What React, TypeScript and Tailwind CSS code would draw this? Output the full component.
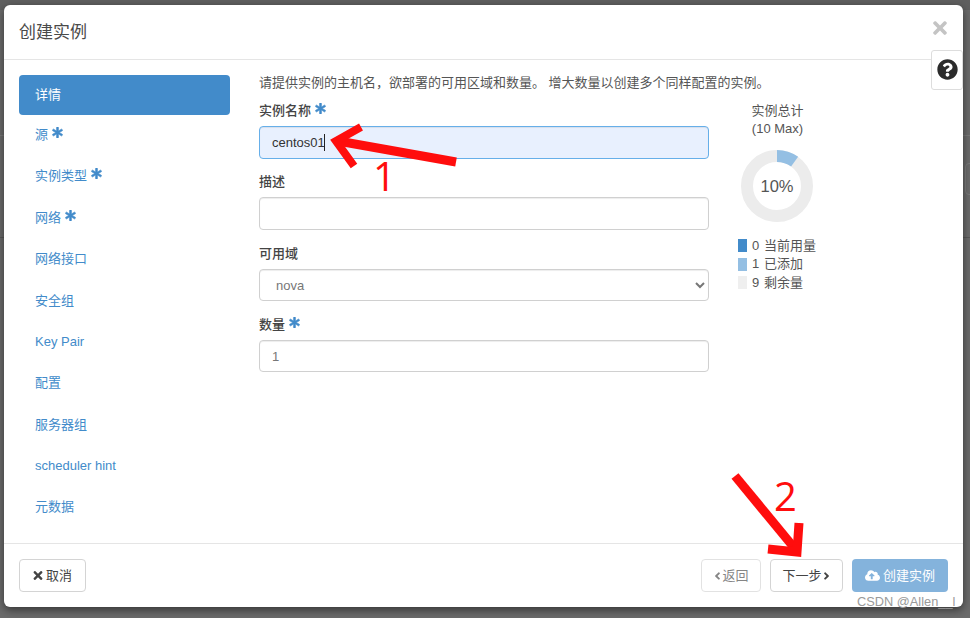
import React from 'react';
import { FaAsterisk, FaTimes, FaQuestionCircle, FaCloudUploadAlt, FaAngleLeft, FaAngleRight } from 'react-icons/fa';

const font = "font-['Liberation_Sans','Noto_Sans_CJK_SC',sans-serif]";

const steps = [
  { label: '源', required: true },
  { label: '实例类型', required: true },
  { label: '网络', required: true },
  { label: '网络接口' },
  { label: '安全组' },
  { label: 'Key Pair' },
  { label: '配置' },
  { label: '服务器组' },
  { label: 'scheduler hint' },
  { label: '元数据' },
];

const Star = () => (
  <FaAsterisk className="inline-block w-[11px] h-[11px] text-[#428bca] stroke-current stroke-[30] ml-[4px] mb-[6px]" />
);

const Field = ({ label, required, className, children }: { label: string; required?: boolean; className?: string; children: React.ReactNode }) => (
  <div className={className}>
    <div className="h-[20px] mb-[5px] text-[13px] leading-[20px] font-medium text-[#444]">
      {label}
      {required && <Star />}
    </div>
    {children}
  </div>
);

const inputCls = 'w-full h-[33px] px-3 text-[13px] rounded-[4px] border border-[#d0d0d0] bg-white shadow-[inset_0_1px_1px_rgba(0,0,0,0.075)] outline-none';

const legend = [
  { color: 'bg-[#428bca]', n: 0, label: '当前用量' },
  { color: 'bg-[#94bfe3]', n: 1, label: '已添加' },
  { color: 'bg-[#efefef]', n: 9, label: '剩余量' },
];

const Donut = () => (
  <div className="relative w-[72px] h-[72px]">
    <svg viewBox="0 0 72 72" className="w-full h-full">
      <circle cx="36" cy="36" r="30" fill="none" stroke="#ececec" strokeWidth="12" />
      <path d="M36 6 A30 30 0 0 1 53.6 11.7" fill="none" stroke="#94bfe3" strokeWidth="12" />
    </svg>
    <div className="absolute inset-0 flex items-center justify-center text-[16.5px] text-[#555]">10%</div>
  </div>
);

// dimmed page that shows round the dialog
const Backdrop = () => (
  <>
    <div className="absolute left-0 top-0 w-full h-[10px] bg-[#5f5f5f]" />
    <div className="absolute left-0 top-[135px] w-full h-px bg-[#7a7a7a]" />
    <div className="absolute left-0 top-[237px] w-full h-px bg-[#585858]" />
    <div className="absolute left-[965px] top-[163px] w-[12px] h-[32px] border border-[#7c7c7c] rounded-[4px]" />
  </>
);

// red marks someone drew over the screenshot
const Annotations = () => (
  <>
    <svg className="absolute left-0 top-0 pointer-events-none" width="970" height="618" fill="none" stroke="#ff0d0d">
      <path d="M456 162 L338 141" strokeWidth="9" />
      <path d="M361 127 L336 141 L354 166" strokeWidth="8" />
      <path d="M735 476 L796 550" strokeWidth="9" />
      <path d="M799 523 L797 552 L768 549" strokeWidth="9" />
    </svg>
    <span className="absolute left-[373px] top-[152px] text-[40px] leading-[48px] font-['Open_Sans'] font-normal text-[#ff0d0d]">1</span>
    <span className="absolute left-[774px] top-[472px] text-[40px] leading-[48px] font-['Open_Sans'] font-normal text-[#ff0d0d]">2</span>
    <span className="absolute left-[857px] top-[594px] text-[12.8px] leading-[16px] text-[#9a9a9a] whitespace-nowrap">CSDN @Allen__l</span>
  </>
);

export default function App() {
  return (
    <div className={`relative w-[970px] h-[618px] overflow-hidden bg-[#6b6b6b] pl-[4px] pt-[5px] ${font}`}>
      <Backdrop />
      <div className="relative w-[959px] h-[602px] flex flex-col bg-white rounded-[6px] shadow-[0_3px_9px_rgba(0,0,0,0.5)]">
        {/* Header */}
        <div className="h-[55px] shrink-0 flex items-center justify-between pl-[15px] pr-[13px] border-b border-[#e5e5e5]">
          <h4 className="text-[17px] text-[#4a4a4a] mt-[1px]">创建实例</h4>
          <FaTimes className="w-[20px] h-[20px] text-[#c4c4c4] mb-[9px]" />
        </div>
        <div className="absolute right-0 top-[45px] w-[32px] h-[40px] flex items-center justify-center pb-[2px] bg-white border border-[#ddd] rounded-[3px]">
          <FaQuestionCircle className="w-[21px] h-[21px] text-[#2b2b2b]" />
        </div>

        {/* Body */}
        <div className="flex-1 flex pl-[15px] pt-[15px] pr-[15px]">
          <ul className="w-[211px] shrink-0 text-[13px] text-[#428bca]">
            <li className="h-[40px] mb-[-1px] flex items-center pl-[16px] bg-[#428bca] text-white rounded-[4px]">详情</li>
            {steps.map((s) => (
              <li key={s.label} className="h-[41.4px] flex items-center pl-[16px]">
                <span>
                  {s.label}
                  {s.required && <Star />}
                </span>
              </li>
            ))}
          </ul>

          <div className="ml-[29px] flex-1">
            <p className="text-[13px] leading-[18px] text-[#555] mt-[-1px] mb-[9px]">
              请提供实例的主机名，欲部署的可用区域和数量。 增大数量以创建多个同样配置的实例。
            </p>
            <div className="flex">
              <div className="w-[450px]">
                <Field label="实例名称" required className="mb-[13px]">
                  <div className="relative">
                    <input
                      readOnly
                      value="centos01"
                      className={`${inputCls} !border-[#66afe9] !bg-[#e8f0fe] text-[#333] shadow-[0_0_4px_rgba(102,175,233,0.6)]`}
                    />
                    <span className="absolute left-[65px] top-[8px] w-px h-[17px] bg-[#222]" />
                  </div>
                </Field>
                <Field label="描述" className="mb-[14px]">
                  <input readOnly className={inputCls} />
                </Field>
                <Field label="可用域" className="mb-[14px]">
                  <select className={`${inputCls} !h-[32px] text-[#777]`}>
                    <option>nova</option>
                  </select>
                </Field>
                <Field label="数量" required>
                  <input readOnly value="1" className={`${inputCls} !h-[32px] text-[#777]`} />
                </Field>
              </div>

              <div className="ml-[29px] w-[80px] text-[13px] text-[#555]">
                <div className="w-[79px] text-center leading-[18px] mt-[1px]">
                  <div>实例总计</div>
                  <div>(10 Max)</div>
                </div>
                <div className="mt-[12px] ml-[3px]">
                  <Donut />
                </div>
                <ul className="mt-[14px]">
                  {legend.map((l) => (
                    <li key={l.n} className="h-[18.7px] flex items-center whitespace-nowrap">
                      <span className={`w-[9px] h-[13px] ${l.color}`} />
                      <span className="ml-[5px] w-[12px]">{l.n}</span>
                      <span>{l.label}</span>
                    </li>
                  ))}
                </ul>
              </div>
            </div>
          </div>
        </div>

        {/* Footer */}
        <div className="h-[64px] shrink-0 flex items-center justify-between px-[15px] border-t border-[#e5e5e5] text-[13px]">
          <button className="w-[67px] h-[33px] flex items-center justify-center gap-[3px] rounded-[4px] border border-[#d4d4d4] text-[#444]">
            <FaTimes className="w-[10px] h-[13px]" />
            取消
          </button>
          <div className="flex gap-[9px]">
            <button className="w-[60px] h-[33px] flex items-center justify-center rounded-[4px] border border-[#d4d4d4] text-[#444] opacity-65">
              <FaAngleLeft className="w-[9px] h-[12px]" />
              返回
            </button>
            <button className="w-[73px] h-[33px] flex items-center justify-center rounded-[4px] border border-[#d4d4d4] text-[#444]">
              下一步
              <FaAngleRight className="w-[9px] h-[12px]" />
            </button>
            <button className="w-[96px] h-[33px] flex items-center justify-center gap-[3px] rounded-[4px] bg-[#84b3dc] text-white">
              <FaCloudUploadAlt className="w-[15px] h-[15px]" />
              创建实例
            </button>
          </div>
        </div>
      </div>
      <Annotations />
    </div>
  );
}
